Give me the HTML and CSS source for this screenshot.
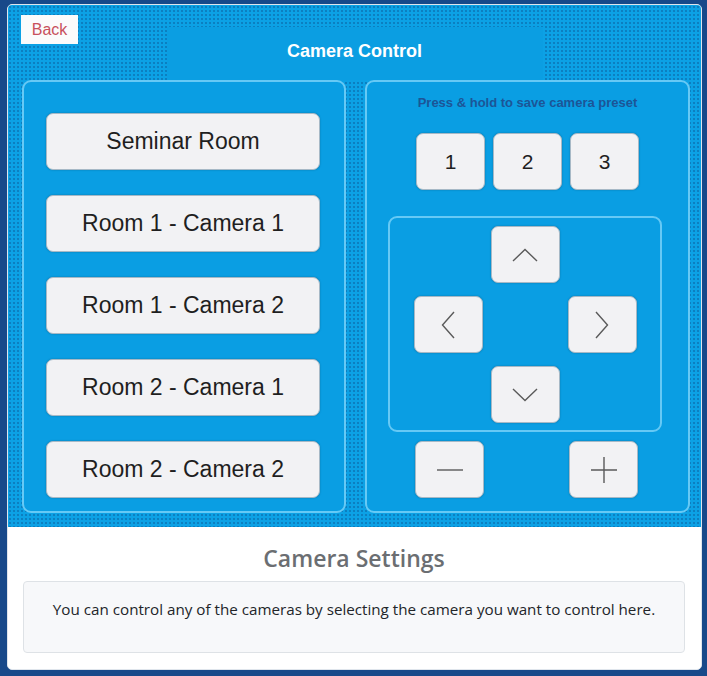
FILE: index.html
```html
<!DOCTYPE html>
<html>
<head>
<meta charset="utf-8">
<link rel="stylesheet" href="styles.css">
</head>
<body>
<div class="card">
  <div class="screen">
    <div class="header">
      <button class="back">Back</button>
      <div class="title">Camera Control</div>
    </div>
    <div class="panels">
      <div class="panel rooms">
        <button class="btn room">Seminar Room</button>
        <button class="btn room">Room 1 - Camera 1</button>
        <button class="btn room">Room 1 - Camera 2</button>
        <button class="btn room">Room 2 - Camera 1</button>
        <button class="btn room">Room 2 - Camera 2</button>
      </div>
      <div class="panel ptz">
        <div class="hint">Press &amp; hold to save camera preset</div>
        <div class="presets">
          <button class="btn sq num">1</button>
          <button class="btn sq num">2</button>
          <button class="btn sq num">3</button>
        </div>
        <div class="dpad">
          <button class="btn sq up"><svg width="26" height="14" viewBox="0 0 26 14"><path d="M1 13 L13 1.5 L25 13" fill="none" stroke="#5a5a5a" stroke-width="1.4"/></svg></button>
          <button class="btn sq left"><svg width="14" height="28" viewBox="0 0 14 28"><path d="M13 1 L1.5 14 L13 27" fill="none" stroke="#5a5a5a" stroke-width="1.4"/></svg></button>
          <button class="btn sq right"><svg width="14" height="28" viewBox="0 0 14 28"><path d="M1 1 L12.5 14 L1 27" fill="none" stroke="#5a5a5a" stroke-width="1.4"/></svg></button>
          <button class="btn sq down"><svg width="26" height="14" viewBox="0 0 26 14"><path d="M1 1 L13 12.5 L25 1" fill="none" stroke="#5a5a5a" stroke-width="1.4"/></svg></button>
        </div>
        <div class="zoomrow">
          <button class="btn sq minus"><svg width="28" height="28" viewBox="0 0 28 28"><path d="M1 14 H27" fill="none" stroke="#5a5a5a" stroke-width="1.4"/></svg></button>
          <button class="btn sq plus"><svg width="28" height="28" viewBox="0 0 28 28"><path d="M1 14 H27 M14 1 V27" fill="none" stroke="#5a5a5a" stroke-width="1.4"/></svg></button>
        </div>
      </div>
    </div>
  </div>
  <div class="info">
    <h2 class="info-title">Camera Settings</h2>
    <div class="desc">
      <p class="desc-text">You can control any of the cameras by selecting the camera you want to control here.</p>
    </div>
  </div>
</div>
</body>
</html>
```

FILE: styles.css
```css
html, body {
  margin: 0;
  padding: 0;
}
body {
  background: #18498a;
  padding: 4px 0 0 7px;
  height: 676px;
  box-sizing: border-box;
  overflow: hidden;
}
.card {
  width: 695px;
  box-sizing: border-box;
  background: #ffffff;
  border: 1px solid #dfe5ec;
  border-radius: 5px;
  overflow: hidden;
}
.screen {
  height: 522px;
  background-color: #0ca1e5;
  background-image: radial-gradient(circle, rgba(10, 70, 130, 0.38) 0.7px, transparent 1.1px);
  background-size: 4px 4px;
  display: flex;
  flex-direction: column;
}
.header {
  height: 75px;
  display: grid;
}
.back {
  grid-area: 1 / 1;
  justify-self: start;
  align-self: start;
  margin: 10px 0 0 13px;
  width: 57px;
  height: 29px;
  padding: 0;
  border: none;
  background: #fbfbfb;
  color: #c8505c;
  font-family: "Liberation Sans", Arial, sans-serif;
  font-size: 16px;
  position: relative;
  z-index: 1;
}
.title {
  grid-area: 1 / 1;
  justify-self: center;
  align-self: start;
  margin-top: 22px;
  width: 376px;
  height: 53px;
  line-height: 48px;
  background: #0b9ee2;
  color: #ffffff;
  text-align: center;
  font-family: "Liberation Sans", Arial, sans-serif;
  font-weight: bold;
  font-size: 18px;
}
.panels {
  display: grid;
  grid-template-columns: 324px 325px;
  column-gap: 19px;
  padding: 0 11px 0 14px;
}
.panel {
  height: 433px;
  box-sizing: border-box;
  border: 2px solid #66c9f5;
  border-radius: 9px;
  background: #0a9ee3;
  display: flex;
  flex-direction: column;
}
.btn {
  background: #f2f2f4;
  border: 1px solid #a7b9c6;
  border-radius: 7px;
  box-shadow: 0 0 2px rgba(0, 0, 0, 0.25);
  color: #1f1f1f;
  font-family: "Liberation Sans", Arial, sans-serif;
  padding: 0;
  box-sizing: border-box;
}
.rooms {
  padding: 31px 0 0 22px;
  gap: 25px;
}
.room {
  width: 274px;
  height: 57px;
  font-size: 23px;
}
.ptz {
  padding-top: 13px;
}
.hint {
  text-align: center;
  font-family: "Liberation Sans", Arial, sans-serif;
  font-weight: bold;
  font-size: 13px;
  line-height: 16px;
  color: #1c5597;
}
.sq {
  width: 69px;
  height: 57px;
  display: flex;
  align-items: center;
  justify-content: center;
}
.num {
  font-size: 21px;
}
.presets {
  display: flex;
  justify-content: center;
  gap: 8px;
  margin-top: 22px;
}
.dpad {
  margin: 26px 0 0 21px;
  width: 274px;
  height: 216px;
  box-sizing: border-box;
  border: 2px solid #66c9f5;
  border-radius: 9px;
  display: grid;
  grid-template-columns: repeat(3, 69px);
  grid-template-rows: repeat(3, 57px);
  column-gap: 8px;
  row-gap: 13px;
  justify-content: center;
  padding-top: 8px;
}
.up { grid-area: 1 / 2; }
.left { grid-area: 2 / 1; }
.right { grid-area: 2 / 3; }
.down { grid-area: 3 / 2; }
.zoomrow {
  display: grid;
  grid-template-columns: repeat(3, 69px);
  column-gap: 8px;
  justify-content: center;
  margin-top: 9px;
  padding-right: 2px;
}
.minus { grid-column: 1; }
.plus { grid-column: 3; }
.info {
  padding: 0 16px 16px 15px;
  text-align: center;
}
.info-title {
  margin: 17px 0 9px;
  font-family: "Open Sans", "Noto Sans", sans-serif;
  font-weight: 600;
  font-size: 23px;
  line-height: 28px;
  color: #6b6e72;
}
.desc {
  background: #f7f8fa;
  border: 1px solid #dee2e6;
  border-radius: 4px;
  padding: 16px;
}
.desc-text {
  margin: 0 0 16px;
  font-family: "Open Sans", "Noto Sans", sans-serif;
  font-size: 15.2px;
  line-height: 22px;
  color: #222529;
}
```
